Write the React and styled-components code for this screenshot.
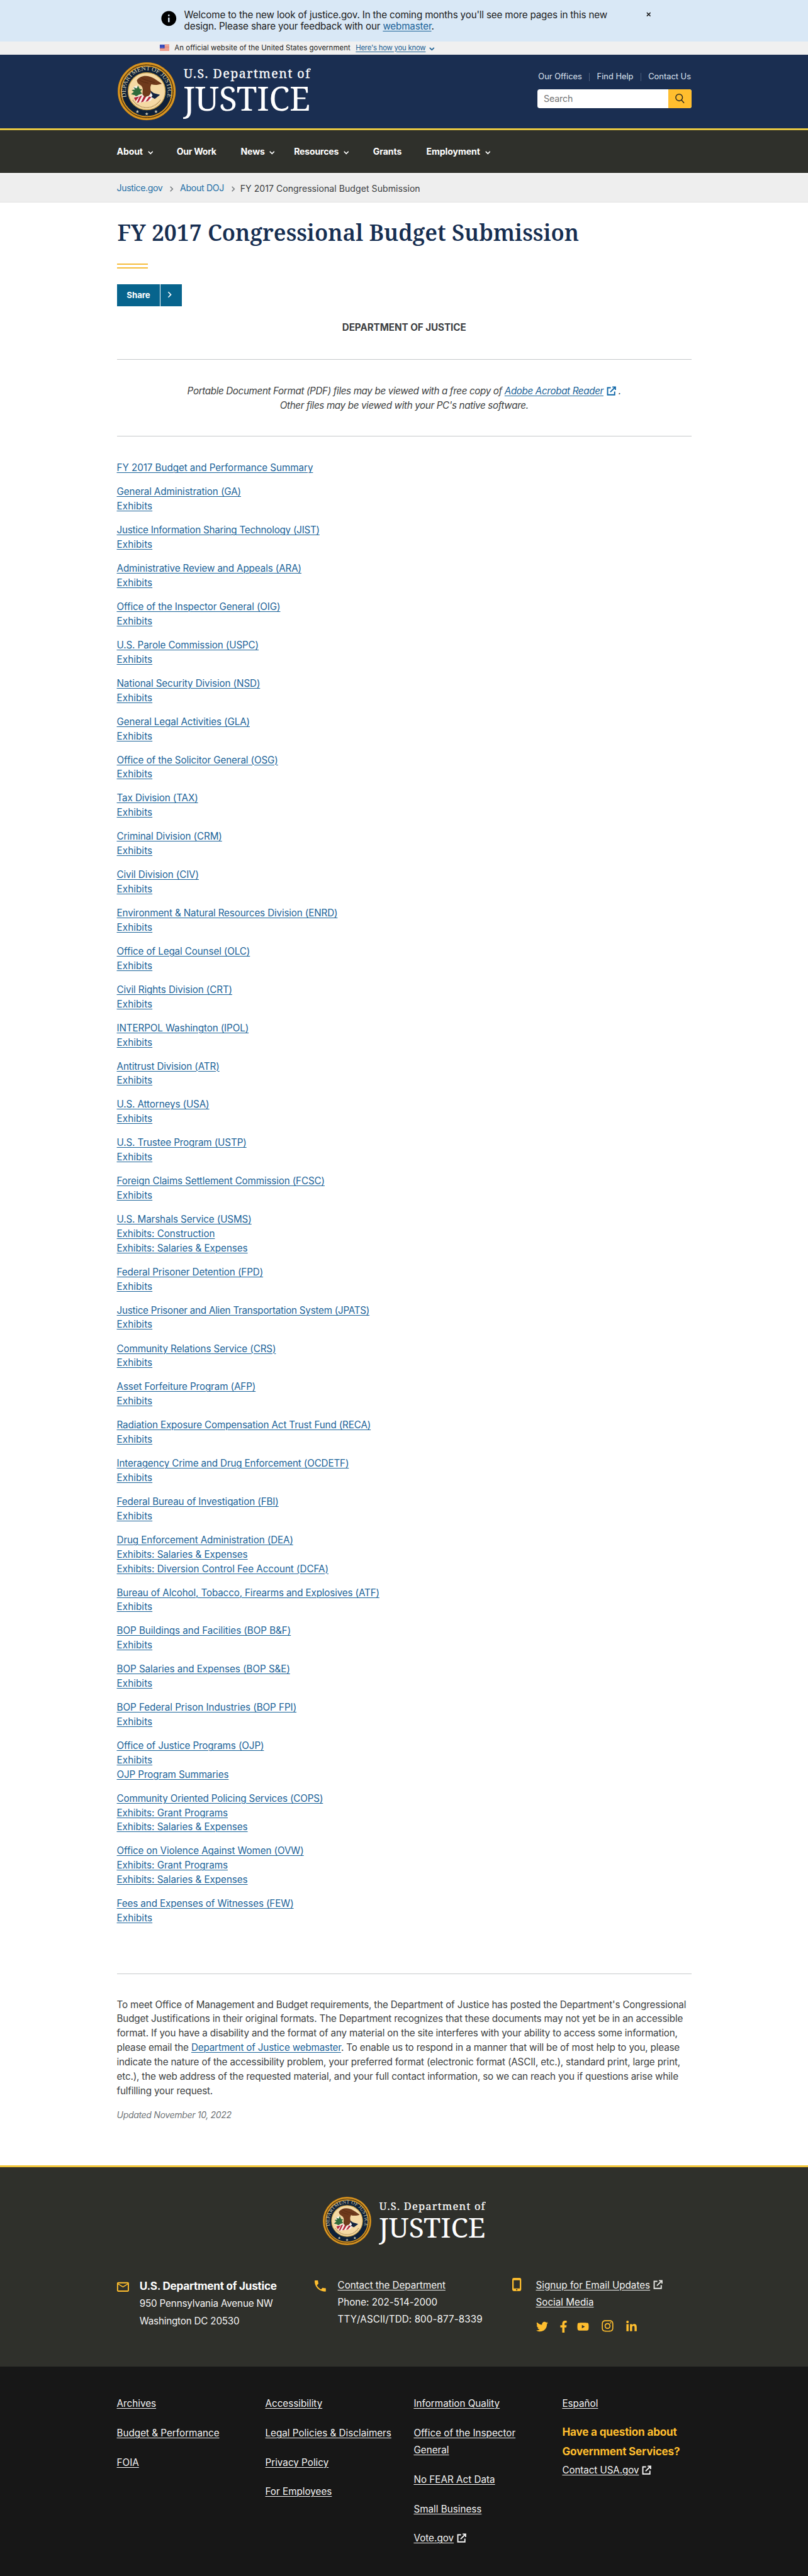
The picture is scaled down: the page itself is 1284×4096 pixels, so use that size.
import React from "react";
import styled, { createGlobalStyle } from "styled-components";
import { MdInfo, MdNavigateNext, MdMailOutline, MdPhone } from "react-icons/md";
import { FaTwitter, FaFacebookF, FaYoutube, FaInstagram, FaLinkedinIn } from "react-icons/fa";

const sans = '"Inter", "Open Sans", "Liberation Sans", sans-serif';
const serif = '"Noto Serif", "DejaVu Serif Condensed", "Liberation Serif", serif';

const Global = createGlobalStyle`
  *, *::before, *::after { box-sizing: border-box; }
  body { margin: 0; background: #171717; overflow-x: hidden; }
  p, h1, h2, h3, ul { margin: 0; padding: 0; font: inherit; }
  ul { list-style: none; }
`;

const Page = styled.div`
  zoom: 0.95145;
  width: 1350px;
  background: #fff;
  font-family: ${sans};
  font-size: 16px;
  line-height: 24px;
  letter-spacing: -0.19px;
  color: #3d3f42;
`;

const Wrap = styled.div`
  width: 960px;
  margin: 0 auto;
`;

const Link = styled.a`
  color: #1a6399;
  text-decoration: underline;
  text-decoration-thickness: 1px;
  text-underline-offset: 2px;
  cursor: pointer;
`;

/* ---------- alert ---------- */
const Alert = styled.div`
  display: flex;
  justify-content: center;
  height: 69px;
  padding-top: 16px;
  background: #d9e8f6;
  color: #1b1b1b;
  line-height: 18.4px;
`;
const AlertInner = styled.div`
  display: flex;
  align-items: flex-start;
  width: 824px;
  padding-left: 4px;
`;
const InfoIcon = styled(MdInfo)`
  width: 30px;
  height: 30px;
  margin: 0 10.5px 0 0;
  color: #000;
  flex: none;
`;
const AlertText = styled.p`
  width: 730px;
`;
const CloseButton = styled.svg`
  width: 8px;
  height: 8px;
  margin: 4px 0 0 47.5px;
  stroke: #1b1b1b;
  stroke-width: 1.7;
`;

/* ---------- government banner ---------- */
const GovBanner = styled.div`
  display: flex;
  justify-content: center;
  height: 22px;
  background: #f0f0f0;
`;
const GovInner = styled.div`
  display: flex;
  align-items: center;
  width: 817px;
  font-size: 12px;
  letter-spacing: 0.05px;
  color: #1b1b1b;
`;
const Flag = styled.svg`
  width: 16px;
  height: 11px;
  margin-right: 9px;
`;
const GovLink = styled(Link)`
  margin: 0 6px 0 9px;
  letter-spacing: -0.28px;
  color: #1b6094;
`;
const ChevronSvg = styled.svg`
  width: 9px;
  height: 6px;
  margin-top: 4px;
  fill: none;
  stroke: currentColor;
  stroke-width: 1.7;
`;
const GovMark = styled.span`
  display: flex;
  color: #1b6094;
`;

/* ---------- header ---------- */
const Header = styled.header`
  height: 127px;
  background: #1a2e51;
  border-bottom: 3.2px solid #e3c542;
`;
const HeaderInner = styled(Wrap)`
  display: flex;
  justify-content: space-between;
`;
const BrandBox = styled.div`
  display: flex;
  gap: ${(p) => p.$gap}px;
  padding: ${(p) => p.$pad};
`;
const SealSvg = styled.svg`
  width: ${(p) => p.$size}px;
  height: ${(p) => p.$size}px;
  flex: none;
  overflow: visible;
`;
const WordmarkSvg = styled.svg`
  width: ${(p) => p.$w}px;
  height: ${(p) => (p.$w * 97) / 212}px;
  font-family: ${serif};
  fill: #fff;
`;
const Utility = styled.div`
  width: 257px;
  padding-top: 26px;
`;
const UtilityLinks = styled.div`
  display: flex;
  align-items: center;
  justify-content: space-between;
  height: 24px;
  padding: 0 1px;
  color: #dfe6f2;
  font-size: 13.5px;
  letter-spacing: 0.02px;
  white-space: nowrap;
`;
const Sep = styled.span`
  width: 1px;
  height: 14px;
  background: #4b5d7c;
`;
const SearchBox = styled.div`
  display: flex;
  height: 32px;
  margin-top: 8px;
  border-radius: 4px;
  overflow: hidden;
  background: #fff;
`;
const SearchField = styled.div`
  flex: 1;
  padding-left: 10px;
  line-height: 32px;
  font-size: 15px;
  letter-spacing: -0.15px;
  color: #757575;
`;
const SearchButton = styled.div`
  display: flex;
  width: 39px;
  align-items: center;
  justify-content: center;
  background: #ffbe2e;
`;

/* ---------- navigation ---------- */
const Nav = styled.nav`
  height: 71px;
  background: #2f302b;
`;
const NavInner = styled(Wrap)`
  display: grid;
  grid-template-columns: 100px 107px 89px 132px 89px auto;
  height: 71px;
  align-items: center;
`;
const NavItem = styled.div`
  display: flex;
  align-items: center;
  gap: 8px;
  color: #fff;
  font-weight: 700;
  font-size: 14.8px;
  letter-spacing: ${(p) => p.$ls || -0.12}px;
  white-space: nowrap;
`;

/* ---------- breadcrumb ---------- */
const Crumbs = styled.div`
  height: 49px;
  border-top: 2.2px solid #fafafa;
  border-bottom: 1.1px solid #e3e3e3;
  background: #eee;
`;
const CrumbsInner = styled(Wrap)`
  display: flex;
  align-items: center;
  height: 48px;
  font-size: 14.8px;
`;
const CrumbLink = styled.a`
  color: #2470a8;
  letter-spacing: ${(p) => p.$ls}px;
`;
const CrumbArrow = styled(MdNavigateNext)`
  width: 18px;
  height: 18px;
  margin: 1px 5px 0 6px;
  color: #71767a;
`;
const CrumbCurrent = styled.span`
  padding-top: 2px;
  margin-left: -2px;
  letter-spacing: 0.04px;
`;

/* ---------- main ---------- */
const Main = styled(Wrap)`
  padding: 29px 0 71px;
`;
const Title = styled.h1`
  font-family: ${serif};
  font-weight: 600;
  font-size: 37.3px;
  line-height: 44px;
  letter-spacing: -0.02px;
  color: #162e51;
  white-space: nowrap;
  padding-left: 1px;
`;
const DoubleRule = styled.div`
  width: 52px;
  height: 8.4px;
  margin: 29px 0 26.6px;
  border-top: 2.2px solid #f6bd3c;
  border-bottom: 2.2px solid #f6bd3c;
`;
const ShareButton = styled.div`
  display: flex;
  width: 109px;
  height: 37px;
  background: #07648d;
  color: #fff;
  font-size: 14px;
  font-weight: 700;
  letter-spacing: -0.05px;
  line-height: 37px;
`;
const ShareLabel = styled.span`
  width: 73px;
  padding-left: 16.5px;
  border-right: 1.1px solid #fff;
`;
const ShareArrow = styled(MdNavigateNext)`
  width: 20px;
  height: 20px;
  margin: 8px 0 0 5.5px;
`;
const Department = styled.h2`
  margin-top: 24px;
  text-align: center;
  font-weight: 700;
  letter-spacing: -0.07px;
`;
const Rule = styled.div`
  height: 1px;
  margin: ${(p) => p.$m};
  background: #c6c8ca;
`;
const Note = styled.p`
  text-align: center;
  font-style: italic;
  letter-spacing: -0.39px;
  white-space: nowrap;
`;
const ExternalSvg = styled.svg`
  width: 16px;
  height: 16px;
  margin: -3px 0 0 ${(p) => p.$ml || 5}px;
  vertical-align: middle;
  color: ${(p) => p.$color};
  fill: none;
  stroke: currentColor;
  stroke-width: 2;
`;
const Office = styled.p`
  display: flex;
  flex-direction: column;
  align-items: flex-start;
  margin-bottom: 16px;
`;
const OfficeLink = styled(Link)`
  letter-spacing: ${(p) => p.$ls}px;
  white-space: nowrap;
`;
const OfficeList = styled.div`
  height: 2447px;
`;
const Statement = styled.p`
  letter-spacing: -0.18px;
  white-space: nowrap;
`;
const Updated = styled.p`
  margin-top: 16.5px;
  font-size: 14.8px;
  font-style: italic;
  letter-spacing: -0.38px;
  color: #71767a;
`;

/* ---------- footer ---------- */
const Footer = styled.footer`
  letter-spacing: 0;
  line-height: 28.8px;
  color: #f5f5f5;
`;
const FooterTop = styled.div`
  height: 337px;
  border-top: 3.2px solid #f0c436;
  background: #2f302b;
`;
const FooterBrand = styled.div`
  display: flex;
  justify-content: center;
  padding-top: 50px;
  height: 132px;
`;
const ContactGrid = styled(Wrap)`
  display: grid;
  grid-template-columns: 330px 331px auto;
  padding-top: 51px;
`;
const Contact = styled.div`
  display: flex;
  align-items: flex-start;
`;
const ContactIcon = styled.span`
  display: flex;
  width: ${(p) => p.$w}px;
  margin-left: ${(p) => p.$shift}px;
  flex: none;
  color: #ffbe2e;
  padding-top: ${(p) => p.$top}px;
`;
const ContactLines = styled.div`
  display: flex;
  flex-direction: column;
  align-items: flex-start;
  white-space: nowrap;
`;
const Strong = styled.h3`
  font-size: 18px;
  font-weight: 700;
  line-height: 31px;
  letter-spacing: -0.27px;
  color: #fff;
`;
const Line = styled.p`
  letter-spacing: ${(p) => p.$ls}px;
`;
const LightLink = styled(Link)`
  color: #f5f5f5;
  letter-spacing: ${(p) => p.$ls || 0}px;
`;
const Social = styled.div`
  display: flex;
  align-items: flex-end;
  height: 20px;
  margin-top: 16.5px;
  color: #ffbe2e;
`;
const SocialItem = styled.span`
  display: flex;
  width: ${(p) => p.$w}px;
  svg { display: block; }
`;
const FooterBottom = styled.div`
  height: 352px;
  padding-top: 47.5px;
  background: #171717;
`;
const LinkGrid = styled(Wrap)`
  display: grid;
  grid-template-columns: repeat(3, 248px) auto;
`;
const LinkColumn = styled.ul`
  display: flex;
  flex-direction: column;
  gap: 20.2px;
`;
const Cell = styled.li`
  max-width: 216px;
  white-space: pre-line;
`;
const Question = styled.li`
  margin-top: -3px;
  white-space: pre-line;
`;
const QuestionTitle = styled.h3`
  color: #ffbe2e;
  font-size: 18px;
  font-weight: 700;
  line-height: 32.4px;
  letter-spacing: -0.19px;
`;

function Chevron() {
  return (
    <ChevronSvg viewBox="0 0 9 6">
      <path d="M.8.9 4.5 4.6 8.2.9" />
    </ChevronSvg>
  );
}

function External({ color }) {
  return (
    <ExternalSvg viewBox="0 0 16 16" $color={color}>
      <path d="M7 2.6H1.6v11.8h11.8V9" />
      <path d="M9.6 1.4h5v5M14.2 1.8 6.2 9.8" />
    </ExternalSvg>
  );
}

function Seal({ size, id }) {
  return (
    <SealSvg $size={size} viewBox="0 0 100 100">
      <defs>
        <path id={id} d="M15.5 61 A36.2 36.2 0 1 1 84.5 61" />
      </defs>
      <circle cx="50" cy="50" r="50" fill="#7a5212" />
      <circle cx="50" cy="50" r="48" fill="none" stroke="#d99420" strokeWidth="3.4" />
      <circle cx="50" cy="50" r="45.4" fill="none" stroke="#3b2f1c" strokeWidth="1.6" strokeDasharray="1.4 1.2" />
      <circle cx="50" cy="50" r="43.6" fill="#0e2038" stroke="#d99420" strokeWidth="2" />
      <circle cx="50" cy="50" r="32" fill="#f5d9a4" stroke="#caa24a" strokeWidth="1.4" />
      <text fontFamily="Liberation Serif, serif" fontSize="10.2" fill="#d8d3b4">
        <textPath href={`#${id}`} textLength="134" lengthAdjust="spacingAndGlyphs" startOffset="1">
          DEPARTMENT OF JUSTICE
        </textPath>
      </text>
      <g fill="#d5cfb4">
        {[[34, 85], [50, 89], [66, 85]].map(([x, y]) => (
          <path key={x} transform={`translate(${x} ${y})`} d="M0-3 .8-.9 3-.9 1.2.4 1.9 2.6 0 1.3-1.9 2.6-1.2.4-3-.9-.8-.9z" />
        ))}
      </g>
      <path d="M26 44l6-4 5 3 1 4-9 3z" fill="#f6efe4" />
      <path d="M23 55l5-4-4-3 6-1-3-4 6 2 2-5 3 6 4 1-3 3 3 4-6 2-4 4-2-3z" fill="#2f6b3c" />
      <path d="M27 60l19-6 16 6-6 7-22 3z" fill="#f7efe9" />
      <path d="M28 61l9-2-6 8zM38 58.5l4-1.2-6 12-3 .4zM46 57l4 1-6 10-4 1zM54 59l4 1-6 7-4 1z" fill="#b4263a" />
      <path d="M53 48l9 5 12 3-10 5-9-2z" fill="#f4f3f0" />
      <path d="M54 47l8 6 11 3-9 7-6-3 2-3z" fill="#14233f" />
      <path d="M33 31c5-7 14-9 23-6 6 2 10 5 20 12-5 2-12 3-18 1-2 4-2 7-1 11 1 4-2 8-4 9l-6 2-4-4c-1-6 2-10-2-15-4-4-7-3-8-10z" fill="#6f3a1c" />
      <path d="M40 26c5 4 12 6 24 9M37 30c5 4 10 5 16 6" stroke="#4f2611" strokeWidth=".8" fill="none" />
      <path d="M26 65a28 28 0 0 0 48-1" fill="none" stroke="#a58249" strokeWidth="1.8" strokeDasharray="1.3 1.1" />
    </SealSvg>
  );
}

function Brand({ seal, word, gap, pad, id }) {
  return (
    <BrandBox $gap={gap} $pad={pad}>
      <Seal size={seal} id={id} />
      <WordmarkSvg $w={word} viewBox="0 0 212 97">
        <text x="1" y="25.6" fontSize="20.5" textLength="209" strokeWidth=".3" stroke="#fff">
          U.S. Department of
        </text>
        <text x="0" y="80.5" fontSize="54.5" textLength="211" lengthAdjust="spacingAndGlyphs">
          JUSTICE
        </text>
      </WordmarkSvg>
    </BrandBox>
  );
}

const nav = [
  ["About", true, -0.12],
  ["Our Work", false, -0.3],
  ["News", true, 0],
  ["Resources", true, -0.18],
  ["Grants", false, -0.05],
  ["Employment", true, -0.06],
];

const E = "Exhibits";
const SE = "Exhibits: Salaries & Expenses";
const GP = "Exhibits: Grant Programs";
const offices = [
  ["FY 2017 Budget and Performance Summary"],
  ["General Administration (GA)", E],
  ["Justice Information Sharing Technology (JIST)", E],
  ["Administrative Review and Appeals (ARA)", E],
  ["Office of the Inspector General (OIG)", E],
  ["U.S. Parole Commission (USPC)", E],
  ["National Security Division (NSD)", E],
  ["General Legal Activities (GLA)", E],
  ["Office of the Solicitor General (OSG)", E],
  ["Tax Division (TAX)", E],
  ["Criminal Division (CRM)", E],
  ["Civil Division (CIV)", E],
  ["Environment & Natural Resources Division (ENRD)", E],
  ["Office of Legal Counsel (OLC)", E],
  ["Civil Rights Division (CRT)", E],
  ["INTERPOL Washington (IPOL)", E],
  ["Antitrust Division (ATR)", E],
  ["U.S. Attorneys (USA)", E],
  ["U.S. Trustee Program (USTP)", E],
  ["Foreign Claims Settlement Commission (FCSC)", E],
  ["U.S. Marshals Service (USMS)", "Exhibits: Construction", SE],
  ["Federal Prisoner Detention (FPD)", E],
  ["Justice Prisoner and Alien Transportation System (JPATS)", E],
  ["Community Relations Service (CRS)", E],
  ["Asset Forfeiture Program (AFP)", E],
  ["Radiation Exposure Compensation Act Trust Fund (RECA)", E],
  ["Interagency Crime and Drug Enforcement (OCDETF)", E],
  ["Federal Bureau of Investigation (FBI)", E],
  ["Drug Enforcement Administration (DEA)", SE, "Exhibits: Diversion Control Fee Account (DCFA)"],
  ["Bureau of Alcohol, Tobacco, Firearms and Explosives (ATF)", E],
  ["BOP Buildings and Facilities (BOP B&F)", E],
  ["BOP Salaries and Expenses (BOP S&E)", E],
  ["BOP Federal Prison Industries (BOP FPI)", E],
  ["Office of Justice Programs (OJP)", E, "OJP Program Summaries"],
  ["Community Oriented Policing Services (COPS)", GP, SE],
  ["Office on Violence Against Women (OVW)", GP, SE],
  ["Fees and Expenses of Witnesses (FEW)", E],
];

const spacing = (line) => {
  if (line === E) return 0.08;
  if (line.startsWith("FY")) return -0.07;
  if (line.startsWith("Justice")) return -0.27;
  if (line.startsWith("BOP") || line.startsWith("Exhibits")) return -0.06;
  return line.length > 40 ? -0.16 : -0.13;
};

const footerLinks = [
  ["Archives", "Budget & Performance", "FOIA"],
  ["Accessibility", "Legal Policies & Disclaimers", "Privacy Policy", "For Employees"],
  ["Information Quality", "Office of the Inspector\nGeneral", "No FEAR Act Data", "Small Business", "Vote.gov"],
];

export default function App() {
  return (
    <>
      <Global />
      <Page>
        <Alert>
          <AlertInner>
            <InfoIcon />
            <AlertText>
              Welcome to the new look of justice.gov. In the coming months you'll see more pages in this new
              <br />
              design. Please share your feedback with our <Link>webmaster</Link>.
            </AlertText>
            <CloseButton viewBox="0 0 8 8">
              <path d="M1 1l6 6M7 1 1 7" />
            </CloseButton>
          </AlertInner>
        </Alert>

        <GovBanner>
          <GovInner>
            <Flag viewBox="0 0 16 11">
              <rect width="16" height="11" fill="#fff" />
              {[0, 2, 4, 6, 8, 10].map((y) => (
                <rect key={y} y={y} width="16" height="1" fill="#db3e1f" />
              ))}
              <rect width="8" height="6" fill="#1e33b1" />
              <path d="M1 1.5h6M1 3.5h6M1 5h6" stroke="#fff" strokeWidth=".6" strokeDasharray=".8 1" />
            </Flag>
            An official website of the United States government
            <GovLink>Here's how you know</GovLink>
            <GovMark>
              <Chevron />
            </GovMark>
          </GovInner>
        </GovBanner>

        <Header>
          <HeaderInner>
            <Brand seal={97} word={213.5} gap={12} pad="13px 0 0 1.5px" id="ring-header" />
            <Utility>
              <UtilityLinks>
                <span>Our Offices</span>
                <Sep />
                <span>Find Help</span>
                <Sep />
                <span>Contact Us</span>
              </UtilityLinks>
              <SearchBox>
                <SearchField>Search</SearchField>
                <SearchButton>
                  <svg width="18" height="18" viewBox="0 0 18 18" fill="none" stroke="#2b2a20" strokeWidth="1.6">
                    <circle cx="7.6" cy="7.4" r="5.6" />
                    <path d="M11.4 11.6 15.8 16.6" />
                  </svg>
                </SearchButton>
              </SearchBox>
            </Utility>
          </HeaderInner>
        </Header>

        <Nav>
          <NavInner>
            {nav.map(([label, menu, ls]) => (
              <NavItem key={label} $ls={ls}>
                {label}
                {menu && <Chevron />}
              </NavItem>
            ))}
          </NavInner>
        </Nav>

        <Crumbs>
          <CrumbsInner>
            <CrumbLink $ls={-0.38}>Justice.gov</CrumbLink>
            <CrumbArrow />
            <CrumbLink $ls={-0.3}>About DOJ</CrumbLink>
            <CrumbArrow />
            <CrumbCurrent>FY 2017 Congressional Budget Submission</CrumbCurrent>
          </CrumbsInner>
        </Crumbs>

        <Main>
          <Title>FY 2017 Congressional Budget Submission</Title>
          <DoubleRule />
          <ShareButton>
            <ShareLabel>Share</ShareLabel>
            <ShareArrow />
          </ShareButton>
          <Department>DEPARTMENT OF JUSTICE</Department>
          <Rule $m="40px 0 41px" />
          <Note>
            Portable Document Format (PDF) files may be viewed with a free copy of <Link>Adobe Acrobat Reader</Link>
            <External color="#0f67a8" /> .
            <br />
            Other files may be viewed with your PC's native software.
          </Note>
          <Rule $m="39px 0 41px" />
          <OfficeList>
            {offices.map((lines) => (
              <Office key={lines[0]}>
                {lines.map((line) => (
                  <OfficeLink key={line} $ls={spacing(line)}>
                    {line}
                  </OfficeLink>
                ))}
              </Office>
            ))}
          </OfficeList>
          <Rule $m="80px 0 40px" />
          <Statement>
            To meet Office of Management and Budget requirements, the Department of Justice has posted the Department's
            Congressional
            <br />
            Budget Justifications in their original formats. The Department recognizes that these documents may not yet
            be in an accessible
            <br />
            format. If you have a disability and the format of any material on the site interferes with your ability to
            access some information,
            <br />
            please email the <Link>Department of Justice webmaster</Link>. To enable us to respond in a manner that will
            be of most help to you, please
            <br />
            indicate the nature of the accessibility problem, your preferred format (electronic format (ASCII, etc.),
            standard print, large print,
            <br />
            etc.), the web address of the requested material, and your full contact information, so we can reach you if
            questions arise while
            <br />
            fulfilling your request.
          </Statement>
          <Updated>Updated November 10, 2022</Updated>
        </Main>

        <Footer>
          <FooterTop>
            <FooterBrand>
              <Brand seal={81} word={179} gap={12.5} pad="0" id="ring-footer" />
            </FooterBrand>
            <ContactGrid>
              <Contact>
                <ContactIcon $w={40} $shift={-2} $top={6}>
                  <MdMailOutline size={24} />
                </ContactIcon>
                <ContactLines>
                  <Strong>U.S. Department of Justice</Strong>
                  <Line $ls={-0.17}>950 Pennsylvania Avenue NW</Line>
                  <Line $ls={-0.21}>Washington DC 20530</Line>
                </ContactLines>
              </Contact>
              <Contact>
                <ContactIcon $w={42} $shift={-3} $top={4}>
                  <MdPhone size={25} />
                </ContactIcon>
                <ContactLines>
                  <LightLink $ls={-0.08}>Contact the Department</LightLink>
                  <Line $ls={-0.05}>Phone: 202-514-2000</Line>
                  <Line $ls={0.08}>TTY/ASCII/TDD: 800-877-8339</Line>
                </ContactLines>
              </Contact>
              <Contact>
                <ContactIcon $w={39} $shift={0} $top={3}>
                  <svg width="15" height="22" viewBox="0 0 15 22">
                    <path
                      fill="currentColor"
                      fillRule="evenodd"
                      d="M2.5 0h10A2.5 2.5 0 0 1 15 2.5v17a2.5 2.5 0 0 1-2.5 2.5h-10A2.5 2.5 0 0 1 0 19.5v-17A2.5 2.5 0 0 1 2.5 0zM2.4 4v13.5h10.2V4zM7.5 18.6a1.2 1.2 0 1 0 0 2.4 1.2 1.2 0 0 0 0-2.4z"
                    />
                  </svg>
                </ContactIcon>
                <ContactLines>
                  <span>
                    <LightLink>Signup for Email Updates</LightLink>
                    <External color="#e6e6e2" />
                  </span>
                  <LightLink>Social Media</LightLink>
                  <Social>
                    <SocialItem $w={36}>
                      <FaTwitter size={20} />
                    </SocialItem>
                    <SocialItem $w={33}>
                      <FaFacebookF size={20} />
                    </SocialItem>
                    <SocialItem $w={40}>
                      <FaYoutube size={20} />
                    </SocialItem>
                    <SocialItem $w={41}>
                      <FaInstagram size={22} />
                    </SocialItem>
                    <SocialItem $w={20}>
                      <FaLinkedinIn size={20} />
                    </SocialItem>
                  </Social>
                </ContactLines>
              </Contact>
            </ContactGrid>
          </FooterTop>
          <FooterBottom>
            <LinkGrid>
              {footerLinks.map((col) => (
                <LinkColumn key={col[0]}>
                  {col.map((label) => (
                    <Cell key={label}>
                      <LightLink>{label}</LightLink>
                      {label === "Vote.gov" && <External color="#f5f5f5" />}
                    </Cell>
                  ))}
                </LinkColumn>
              ))}
              <LinkColumn>
                <Cell>
                  <LightLink>Español</LightLink>
                </Cell>
                <Question>
                  <QuestionTitle>{"Have a question about\nGovernment Services?"}</QuestionTitle>
                  <LightLink $ls={-0.1}>Contact USA.gov</LightLink>
                  <External color="#f5f5f5" />
                </Question>
              </LinkColumn>
            </LinkGrid>
          </FooterBottom>
        </Footer>
      </Page>
    </>
  );
}
